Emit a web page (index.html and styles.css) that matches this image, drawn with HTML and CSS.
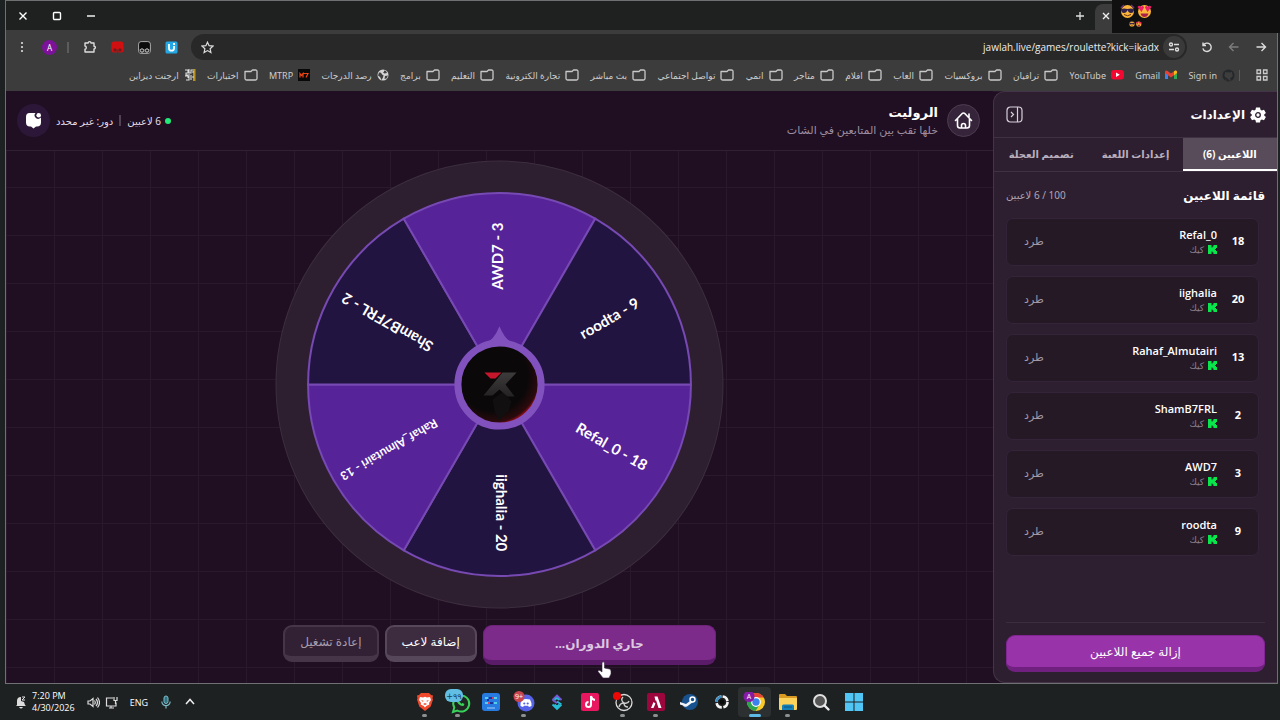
FILE: index.html
```html
<!DOCTYPE html>
<html lang="ar" dir="rtl">
<head>
    <meta charset="UTF-8">
    <title>الروليت</title>
    <meta name="viewport" content="width=device-width, initial-scale=1.0">
    <link rel="stylesheet" href="styles.css">
</head>
<body>
    <svg class="defs" aria-hidden="true">
        <symbol id="folder" viewBox="0 0 14 12"><path d="M1 2.500v7q0 1.500 1.500 1.500h9q1.500 0 1.500-1.500v-7q0-1.500-1.500-1.500H8.500L7 2.500z" fill="none" stroke="#c9c9c9" stroke-width="1.300" stroke-linejoin="round"/></symbol>
        <symbol id="kick" viewBox="0 0 9 9"><path d="M0 0h3.500v2.500h1V1.500h1V0H9v3H8v1H7v1h1v1h1v3H5.500V7.500h-1v-1h-1V9H0z" fill="#08e64c"/></symbol>
    </svg>

    <div class="window">
        <div class="tabstrip">
            <div class="tab"><button class="tab-close" aria-label="إغلاق التبويب"><svg width="8" height="8" viewBox="0 0 8 8"><path d="M1 1l6 6M7 1L1 7" stroke="#eee" stroke-width="1.400"/></svg></button></div>
            <button class="plain" aria-label="تبويب جديد"><svg width="10" height="10" viewBox="0 0 10 10"><path d="M5 1v8M1 5h8" stroke="#ddd" stroke-width="1.300"/></svg></button>
            <div class="window-buttons">
                <button class="plain" aria-label="تصغير"><svg width="10" height="10" viewBox="0 0 10 10"><path d="M1 5h8" stroke="#fff" stroke-width="1.400"/></svg></button>
                <button class="plain" aria-label="تكبير"><svg width="10" height="10" viewBox="0 0 10 10"><rect x="1.500" y="1.500" width="7" height="7" rx="1" fill="none" stroke="#fff" stroke-width="1.400"/></svg></button>
                <button class="plain" aria-label="إغلاق"><svg width="10" height="10" viewBox="0 0 10 10"><path d="M1.500 1.500l7 7M8.500 1.500l-7 7" stroke="#fff" stroke-width="1.400"/></svg></button>
            </div>
        </div>

        <div class="toolbar">
            <div class="nav-buttons">
                <button class="plain" aria-label="رجوع"><svg width="12" height="12" viewBox="0 0 12 12"><path d="M1.500 6h9M6.500 2l4 4-4 4" fill="none" stroke="#ddd" stroke-width="1.400"/></svg></button>
                <button class="plain" aria-label="للأمام"><svg width="12" height="12" viewBox="0 0 12 12"><path d="M10.500 6h-9M5.500 2l-4 4 4 4" fill="none" stroke="#7c7c7c" stroke-width="1.400"/></svg></button>
                <button class="plain" aria-label="تحديث"><svg width="12" height="12" viewBox="0 0 12 12"><path d="M2 1.500v3h3M2.300 4.300a4.200 4.200 0 1 1-.4 3" fill="none" stroke="#ddd" stroke-width="1.400"/></svg></button>
            </div>
            <div class="address">
                <button class="site-info" aria-label="معلومات الموقع"><svg width="12" height="12" viewBox="0 0 12 12" fill="none" stroke="#ddd" stroke-width="1.400"><circle cx="3" cy="3.500" r="1.500"/><path d="M6 3.500h5M1 8.500h5"/><circle cx="9" cy="8.500" r="1.500"/></svg></button>
                <input class="url" type="text" dir="ltr" aria-label="العنوان" value="jawlah.live/games/roulette?kick=ikadx">
                <button class="plain" aria-label="إضافة إلى المفضلة"><svg width="13" height="13" viewBox="0 0 13 13"><path d="M6.500 1.200l1.600 3.500 3.800.4-2.800 2.600.8 3.800-3.400-1.900-3.400 1.900.8-3.800L1.100 5.100l3.800-.4z" fill="none" stroke="#ddd" stroke-width="1.200"/></svg></button>
            </div>
            <div class="extensions">
                <svg width="13" height="13" viewBox="0 0 13 13"><rect x=".5" y=".5" width="12" height="12" rx="1.500" fill="#24a7e5"/><path d="M4 3v4.200a2.500 2.500 0 0 0 5 0V5" fill="none" stroke="#fff" stroke-width="1.800"/><path d="M8 2h2v2H8z" fill="#fff"/></svg>
                <svg width="13" height="13" viewBox="0 0 13 13"><rect x=".6" y=".6" width="11.800" height="11.800" rx="2.500" fill="#0b0b0b" stroke="#aaa"/><path d="M1 8h11v2q0 2-2 2H3q-2 0-2-2z" fill="#3c3c3c"/><circle cx="4" cy="9.500" r="1.700" fill="#222" stroke="#ccc"/><circle cx="9" cy="9.500" r="1.700" fill="#222" stroke="#ccc"/></svg>
                <svg width="13" height="13" viewBox="0 0 13 13"><rect x=".5" y=".5" width="12" height="11" rx="2.500" fill="#d01010"/><circle cx="4" cy="9" r="1.700" fill="#771818"/><circle cx="9" cy="9" r="1.700" fill="#771818"/><path d="M5.700 8.500h1.600v4H5.700z" fill="#3c3c3c"/></svg>
                <svg width="14" height="14" viewBox="0 0 14 14"><path d="M2 3h3.200a1.400 1.400 0 0 1 2.800 0h3v3.200a1.400 1.400 0 0 1 0 2.800v3H2V9.300a1.700 1.700 0 0 0 0-3.300z" fill="none" stroke="#ddd" stroke-width="1.400" stroke-linejoin="round"/></svg>
                <span class="divider"></span>
                <button class="profile">A</button>
                <button class="plain" aria-label="القائمة"><svg width="4" height="12" viewBox="0 0 4 12" fill="#ddd"><circle cx="2" cy="2" r="1.100"/><circle cx="2" cy="6" r="1.100"/><circle cx="2" cy="10" r="1.100"/></svg></button>
            </div>
        </div>

        <nav class="bookmarks">
            <svg width="12" height="12" viewBox="0 0 12 12" fill="none" stroke="#ccc" stroke-width="1.300"><path d="M1 1h3.500v3.500H1zM7.500 1H11v3.500H7.500zM1 7.500h3.500V11H1zM7.500 7.500H11V11H7.500z"/></svg>
            <span class="divider"></span>
            <div class="links">
                <a href="#"><svg width="13" height="13" viewBox="0 0 13 13"><circle cx="6.500" cy="6.500" r="6" fill="#25282b"/><path d="M4.500 12.500v-2q-2 .3-2.500-1.200M8.500 12.500v-2q0-1-.5-1.300 2.700-.5 2.700-3 0-1-.7-1.800.2-.8-.1-1.600-.9 0-1.700.7-1.700-.4-3.300 0-.8-.7-1.700-.7-.3.8-.1 1.600-.7.8-.7 1.800 0 2.500 2.700 3" fill="#3d3d3d"/></svg><span>Sign in</span></a>
                <a href="#"><svg width="12" height="10" viewBox="0 0 12 10"><path d="M0 1.500V9h3V4z" fill="#3f83f1"/><path d="M12 1.500V9H9V4z" fill="#31a853"/><path d="M0 1.500Q1-.2 2.600 1L6 3.600 9.400 1Q11-.2 12 1.500V3L6 7.500 0 3z" fill="#e34133"/><path d="M9 1.300L9.400 1Q11-.2 12 1.500V3L9 5.200z" fill="#f7bb15"/></svg><span>Gmail</span></a>
                <a href="#"><svg width="13" height="10" viewBox="0 0 13 10"><rect width="13" height="9.500" rx="3" fill="#f20831"/><path d="M5 2.600v4.300l3.800-2.100z" fill="#fff"/></svg><span>YouTube</span></a>
                <a href="#"><svg width="14" height="12"><use href="#folder"/></svg><span>ترافيان</span></a>
                <a href="#"><svg width="14" height="12"><use href="#folder"/></svg><span>بروكسيات</span></a>
                <a href="#"><svg width="14" height="12"><use href="#folder"/></svg><span>العاب</span></a>
                <a href="#"><svg width="14" height="12"><use href="#folder"/></svg><span>افلام</span></a>
                <a href="#"><svg width="14" height="12"><use href="#folder"/></svg><span>متاجر</span></a>
                <a href="#"><svg width="14" height="12"><use href="#folder"/></svg><span>انمي</span></a>
                <a href="#"><svg width="14" height="12"><use href="#folder"/></svg><span>تواصل اجتماعي</span></a>
                <a href="#"><svg width="14" height="12"><use href="#folder"/></svg><span>بث مباشر</span></a>
                <a href="#"><svg width="14" height="12"><use href="#folder"/></svg><span>تجارة الكترونية</span></a>
                <a href="#"><svg width="14" height="12"><use href="#folder"/></svg><span>التعليم</span></a>
                <a href="#"><svg width="14" height="12"><use href="#folder"/></svg><span>برامج</span></a>
                <a href="#"><svg width="12" height="12" viewBox="0 0 12 12"><circle cx="6" cy="6" r="5.500" fill="#d4d4d4"/><path d="M2 3.500q2-.5 2.500 1t2 1.500L6 8.500 4.500 11 3 8 1 6.500zM7 1.500q.5 1.500-1 2l1.500 1 2.500-.5-1-2zM8 7l3-.5-1.500 3L7.500 10z" fill="#404040"/></svg><span>رصد الدرجات</span></a>
                <a href="#"><svg width="12" height="12" viewBox="0 0 12 12"><rect width="12" height="12" fill="#080808"/><path d="M2 8.500v-4l1.500 2 1.500-2v4M5.500 4.500h4.500l-2 4" fill="none" stroke="#ed4312" stroke-width="1.200"/></svg><span>MTRP</span></a>
                <a href="#"><svg width="14" height="12"><use href="#folder"/></svg><span>اختبارات</span></a>
                <a href="#"><svg width="12" height="12" viewBox="0 0 12 12"><path d="M9 0h2.500v12H9z" fill="#b99424"/><path d="M1 1h3v3H2v2h4M5 0v4h2V1h2M1 7h3v2M5 7v4H2M7 6v5M8 8h2M8 3h2" fill="none" stroke="#ddd" stroke-width="1.100"/></svg><span>ارجنت ديزاين</span></a>
            </div>
        </nav>

        <div class="page">
            <aside class="sidebar">
                <header class="sidebar-header">
                    <svg width="16" height="16" viewBox="0 0 16 16"><path d="M6 .5h4l.5 2.300 1.300.7L14 2.800 15.900 6l-1.700 1.500v1L15.900 10 14 13.200l-2.200-.7-1.300.7-.5 2.300H6l-.5-2.300-1.300-.7-2.200.7L.1 10l1.700-1.500v-1L.1 6 2 2.800l2.200.7 1.300-.7z" fill="#fff"/><circle cx="8" cy="8" r="2.300" fill="#fff" stroke="#2d1f30" stroke-width="1.300"/></svg>
                    <h2>الإعدادات</h2>
                    <button class="plain collapse" aria-label="طي القائمة"><svg width="17" height="17" viewBox="0 0 17 17" fill="none" stroke="#d8d0da" stroke-width="1.200"><rect x="1" y="1" width="15" height="15" rx="3.500"/><path d="M11.500 1v15M5 6l2.500 2.500L5 11"/></svg></button>
                </header>
                <div class="tabs">
                    <button class="active">اللاعبين (6)</button>
                    <button>إعدادات اللعبة</button>
                    <button>تصميم العجلة</button>
                </div>
                <div class="list-header">
                    <h3>قائمة اللاعبين</h3>
                    <span>100 / 6 لاعبين</span>
                </div>
                <ul class="players">
                    <li><b>18</b><div class="player"><strong>Refal_0</strong><small><svg width="9" height="9"><use href="#kick"/></svg>كيك</small></div><button>طرد</button></li>
                    <li><b>20</b><div class="player"><strong>iighalia</strong><small><svg width="9" height="9"><use href="#kick"/></svg>كيك</small></div><button>طرد</button></li>
                    <li><b>13</b><div class="player"><strong>Rahaf_Almutairi</strong><small><svg width="9" height="9"><use href="#kick"/></svg>كيك</small></div><button>طرد</button></li>
                    <li><b>2</b><div class="player"><strong>ShamB7FRL</strong><small><svg width="9" height="9"><use href="#kick"/></svg>كيك</small></div><button>طرد</button></li>
                    <li><b>3</b><div class="player"><strong>AWD7</strong><small><svg width="9" height="9"><use href="#kick"/></svg>كيك</small></div><button>طرد</button></li>
                    <li><b>9</b><div class="player"><strong>roodta</strong><small><svg width="9" height="9"><use href="#kick"/></svg>كيك</small></div><button>طرد</button></li>
                </ul>
                <div class="sidebar-footer">
                    <button class="btn btn-clear">إزالة جميع اللاعبين</button>
                </div>
            </aside>

            <main class="game">
                <header class="game-header">
                    <a class="home" href="#" aria-label="الرئيسية"><svg width="19" height="19" viewBox="0 0 19 19" fill="none" stroke="#fff" stroke-width="1.600" stroke-linecap="round" stroke-linejoin="round"><path d="M1.500 9.500L8 2.700q1.500-1.400 3 0l6.500 6.800M3.500 8v6.500q0 2.500 2.500 2.500h7q2.500 0 2.500-2.500V8M15 6V3M7.500 17v-2.500a2 2 0 0 1 4 0V17"/></svg></a>
                    <div class="title">
                        <h1>الروليت</h1>
                        <p>خلها تقب بين المتابعين في الشات</p>
                    </div>
                    <div class="status">
                        <i class="dot"></i>
                        <span>6 لاعبين</span>
                        <span class="divider"></span>
                        <span>دور: غير محدد</span>
                    </div>
                    <button class="chat" aria-label="الدردشة"><svg width="17" height="17" viewBox="0 0 17 17"><path d="M4.500 1h6a3.300 3.300 0 0 0 5.300 4.500l.2 1.500v3.500q0 4-4 4h-1L8.500 16.500 6 14.500H5q-4 0-4-4V5q0-4 3.500-4z" fill="#fff"/><circle cx="13.700" cy="3.200" r="2.300" fill="#fff"/></svg></button>
                </header>

                <div class="wheel-area">
                    <svg class="wheel" viewBox="-224 -224 448 448">
                        <circle r="223" fill="#2d1f2f" stroke="#3d2e3f"/>
                        <g stroke="#7749b3" stroke-width="2">
                            <path d="M0 0H191A191 191 0 0 1 95.500 165.400Z" fill="#572399"/>
                            <path d="M0 0L95.500 165.400A191 191 0 0 1-95.500 165.400Z" fill="#221440"/>
                            <path d="M0 0L-95.500 165.400A191 191 0 0 1-191 0Z" fill="#572399"/>
                            <path d="M0 0H-191A191 191 0 0 1-95.500-165.400Z" fill="#221440"/>
                            <path d="M0 0L-95.500-165.400A191 191 0 0 1 95.500-165.400Z" fill="#572399"/>
                            <path d="M0 0L95.500-165.400A191 191 0 0 1 191 0Z" fill="#221440"/>
                        </g>
                        <g class="names">
                            <text x="128" y="3" transform="rotate(30)">Refal_0 - 18</text>
                            <text x="128" y="3" transform="rotate(90)">iighalia - 20</text>
                            <text class="long" x="128" y="3" transform="rotate(150)">Rahaf_Almutairi - 13</text>
                            <text x="128" y="3" transform="rotate(210)">ShamB7FRL - 2</text>
                            <text x="128" y="3" transform="rotate(270)">AWD7 - 3</text>
                            <text x="128" y="3" transform="rotate(330)">roodta - 9</text>
                        </g>
                        <path d="M0-58Q-6-43-15-41H15Q6-43 0-58z" fill="#8152bd"/>
                        <defs>
                            <radialGradient id="hub" cx=".42" cy=".4" r=".6"><stop offset=".7" stop-color="#0a0809"/><stop offset=".92" stop-color="#2c0a0d"/><stop offset="1" stop-color="#c4121d"/></radialGradient>
                            <linearGradient id="steel" x2="0" y2="1"><stop offset="0" stop-color="#3e3b3c"/><stop offset="1" stop-color="#252224"/></linearGradient>
                        </defs>
                        <circle r="41.500" fill="url(#hub)" stroke="#8152bd" stroke-width="7"/>
                        <path d="M-7 15L4 7 12 17 9 27-1 36-5 26z" fill="#120f10"/>
                        <path d="M3-12H17L6 0 15 12H8L0 5-7 11H-16L-11 5z" fill="url(#steel)"/>
                        <path d="M-15-12H2L-4-6H-9z" fill="#c5162b"/>
                    </svg>
                </div>

                <div class="actions">
                    <button class="btn btn-spin">جاري الدوران...<svg class="cursor" width="15" height="18" viewBox="0 0 15 18"><path d="M5 1.500q1.500-1.500 2.500.5V7l5 1q1.500.5 1.500 2v3l-2 4H6L1 10.500q0-2 2-1l2 1.500z" fill="#fff" stroke="#33203a" stroke-width=".6"/></svg></button>
                    <button class="btn btn-add">إضافة لاعب</button>
                    <button class="btn btn-reset">إعادة تشغيل</button>
                </div>
            </main>
        </div>
    </div>

    <div class="emojis">
        <svg width="34" height="28" viewBox="0 0 34 28">
            <g id="faces">
                <circle cx="7.500" cy="7.500" r="6.500" fill="#f9b43a"/><path d="M1 5q3-1 6.500 0Q11 4 14 5q0 4-3 4-2.500 0-3.500-3-1 3-3.500 3Q1 9 1 5z" fill="#30204a"/><path d="M4 10.500q3.500 2.500 7 0" fill="none" stroke="#6b3410"/><path d="M1 4L4 1M14 4l-3-3" stroke="#6c357d" stroke-width="1.500"/>
                <circle cx="24.500" cy="7.500" r="6.500" fill="#f9b43a"/><path d="M17.500 3q2-2.500 3.500 0 2-2 3 .5L21.500 8zM25 3.500q1-2.500 3-.5 1.500-2.500 3.500 0L27.500 8z" fill="#ee1d68"/><path d="M20.500 9.500h8q-1 3.500-4 3.500t-4-3.500z" fill="#a82048"/>
            </g>
            <use href="#faces" transform="translate(9 17) scale(.4)"/>
        </svg>
    </div>

    <footer class="taskbar">
        <div class="apps">
            <a href="#" aria-label="ابدأ"><svg width="20" height="20" viewBox="0 0 20 20" fill="#51c5f4"><path d="M1 1h8.500v8.500H1zM10.500 1H19v8.500h-8.500zM1 10.500h8.500V19H1zM10.500 10.500H19V19h-8.500z"/></svg></a>
            <a href="#" aria-label="بحث"><svg width="20" height="20" viewBox="0 0 20 20"><circle cx="9" cy="9" r="6" fill="#555" stroke="#e0e0e0" stroke-width="2"/><path d="M13.500 13.500l4 4" stroke="#eee" stroke-width="2.400" stroke-linecap="round"/></svg></a>
            <a class="open" href="#" aria-label="الملفات"><svg width="20" height="20" viewBox="0 0 20 20"><path d="M1 3q0-1 1-1h5l2 2h9q1 0 1 1v5H1z" fill="#d89a20"/><path d="M1 6h18v11q0 1-1 1H2q-1 0-1-1z" fill="#fbd25a"/><path d="M4 18v-4q0-1.500 1.500-1.500h9Q16 12.500 16 14v4z" fill="#157fb8"/><path d="M6 15h8" stroke="#0b5485"/></svg></a>
            <a class="open current" href="#" aria-label="Chrome"><svg width="24" height="20" viewBox="0 0 24 20"><circle cx="13" cy="10" r="9" fill="#f8c927"/><path d="M5.200 5.500A9 9 0 0 1 20.800 5.500H13L9 12z" fill="#e64436"/><path d="M5.200 5.500A9 9 0 0 0 12.500 19L17 12l-8 0z" fill="#2da450"/><circle cx="13" cy="10" r="4.300" fill="#3c82ec" stroke="#fff" stroke-width="1.200"/><circle cx="6" cy="4.500" r="5.500" fill="#861ba5"/><text x="6" y="7" font-size="7">A</text></svg></a>
            <a href="#" aria-label="المسجل"><svg width="20" height="20" viewBox="0 0 20 20" fill="none" stroke-width="2.600"><circle cx="10" cy="10" r="5.500" stroke="#f4f4f4" stroke-dasharray="7 1.640"/><path d="M4.500 10A5.500 5.500 0 0 1 10 4.500" stroke="#3e8fc5"/><circle cx="10" cy="10" r="2.500" fill="#0b0c0c"/></svg></a>
            <a href="#" aria-label="Steam"><svg width="20" height="20" viewBox="0 0 20 20"><circle cx="11" cy="10" r="8" fill="#17528e"/><path d="M1 10l6 2 4-3 3-3.500 2 3-4 3-4 3q-3 1-4-1l-3-1z" fill="#eef4fa"/><circle cx="13.500" cy="7.500" r="2.500" fill="#17528e" stroke="#fff" stroke-width="1.500"/></svg></a>
            <a class="open" href="#" aria-label="Lambda"><svg width="20" height="20" viewBox="0 0 20 20"><rect x="1" y="1" width="18" height="18" rx="2" fill="#9c063d"/><path d="M8.500 4.500h3L15.500 16h-3L10 8l-.5 1M7.500 10L5 16h2.500l2-4.500z" fill="#fff"/></svg></a>
            <a class="open" href="#" aria-label="OBS"><svg width="20" height="20" viewBox="0 0 20 20"><circle cx="11" cy="10.500" r="8" fill="#212222" stroke="#ddd" stroke-width="1.300"/><path d="M10 5q-3 3 1 6 4 1 5-2M11 11q-4 0-5 4M11 11q0 4 4 4" fill="none" stroke="#ccc" stroke-width="1.400"/><circle cx="4" cy="4" r="4" fill="#ed0808"/></svg></a>
            <a href="#" aria-label="TikTok"><svg width="20" height="20" viewBox="0 0 20 20"><rect x="1" y="1" width="18" height="18" rx="2" fill="#e9175f"/><path d="M11 4v8.500a2.500 2.500 0 1 1-2.500-2.500M11 4q.5 3.500 4 4" fill="none" stroke="#fff" stroke-width="2"/></svg></a>
            <a href="#" aria-label="Streamer"><svg width="20" height="20" viewBox="0 0 20 20" fill="none" stroke-width="1.800"><path d="M5.500 8L10 3.500 14.500 8M5.500 8l4.500 3" stroke="#7b57d8"/><path d="M14.500 12.500L10 17l-4.500-4.500M14.500 12.500L10 9.500M7.500 8L10 6l2.500 2M7.500 12.500l2.500 2 2.500-2" stroke="#26bdd7"/></svg></a>
            <a class="open" href="#" aria-label="Discord"><svg width="22" height="22" viewBox="0 0 22 22"><circle cx="13" cy="12" r="8.500" fill="#5663e9"/><path d="M9 8.500q4-1.200 8 0 2 3.500 1.500 6.500l-2.500 1-1-1.200h-4L10 16l-2.500-1Q7 12 9 8.500z" fill="#fff"/><circle cx="11.300" cy="12.500" r="1.100" fill="#5663e9"/><circle cx="14.700" cy="12.500" r="1.100" fill="#5663e9"/><circle cx="6" cy="5.500" r="5.500" fill="#c8454f"/><text x="6" y="8" font-size="7">9+</text></svg></a>
            <a href="#" aria-label="المتجر"><svg width="20" height="20" viewBox="0 0 20 20"><rect x="1" y="1" width="18" height="18" rx="3" fill="#277be0"/><path d="M4 6h3M13 6h3M4 11h3M13 11h3" stroke="#53d0e8" stroke-width="2"/><path d="M8 6h3M9 11h3M6 8h2" stroke="#1a329d" stroke-width="2"/><path d="M11 6h2M7 11h2" stroke="#cf416b" stroke-width="2"/><path d="M6 16h8" stroke="#a3cff9"/></svg></a>
            <a class="open" href="#" aria-label="WhatsApp"><svg width="26" height="26" viewBox="0 0 26 26"><path d="M8 23l1.300-4.500a8 8 0 1 1 3 3z" fill="#202722" stroke="#3ad15b" stroke-width="2"/><path d="M12.500 10.500q-1.500 2 1 4.500t5 2l1-2-2-1-1 .8-2.300-2.300.6-1-1-2z" fill="#3ad15b"/><rect x="0" y="0" width="18" height="13" rx="6" fill="#62bfe3"/><text class="badge-text" x="9" y="10" font-size="8">+٩٩</text></svg></a>
            <a class="open" href="#" aria-label="Brave"><svg width="20" height="20" viewBox="0 0 20 20"><path d="M6 1h8l2 2 2 .5-.5 3 .5 1-2.300 7L10 19l-5.700-4.500L2 7.500l.5-1-.5-3L4 3z" fill="#f0492c"/><path d="M5 5l3 .5 2-.8 2 .8 3-.5 1 3-2 3 .3 1.500-3 1.500L10 15.500 8.700 14l-3-1.500L6 11 4 8z" fill="#fff"/><path d="M6 8l2.500.7L8 10zM14 8l-2.500.7L12 10zM8 12l2-1 2 1-2 1z" fill="#f0492c"/></svg></a>
        </div>
        <div class="tray">
            <svg width="12" height="12" viewBox="0 0 12 12"><path d="M2 8l4-4.500L10 8" fill="none" stroke="#eee" stroke-width="1.500"/></svg>
            <svg width="12" height="14" viewBox="0 0 12 14"><rect x="4" y="1" width="4" height="7.500" rx="2" fill="#2f7382" stroke="#7db9c6"/><path d="M1.800 6.500a4.200 4.200 0 0 0 8.400 0M6 11v2.500" fill="none" stroke="#7db9c6" stroke-width="1.200"/></svg>
            <span class="lang">ENG</span>
            <span class="sound">
                <svg width="13" height="13" viewBox="0 0 13 13" fill="none" stroke="#ddd" stroke-width="1.200"><path d="M8 2H1.500v8H11V6.500M4 12h5M6 10v2"/><path d="M9 1v3.500h3V1M10.500 4.500V8"/></svg>
                <svg width="13" height="13" viewBox="0 0 13 13" fill="none" stroke="#ddd" stroke-width="1.200"><path d="M1 5h2l3-2.500v8L3 8H1zM7.500 4.500q1.500 2 0 4M9 3q3 3.500 0 7M10.500 1.500q4 5 0 10"/></svg>
            </span>
            <time dir="ltr">7:20 PM<br>4/30/2026</time>
            <svg width="12" height="13" viewBox="0 0 12 13"><path d="M2 5q0-4 4-4v4l3 1 1 3 1 1H1l1-1zM4 11h4q-2 3-4 0z" fill="#ddd"/><path d="M7 1h3L7 4h3" fill="none" stroke="#ddd"/></svg>
        </div>
    </footer>
</body>
</html>
```
FILE: styles.css
```css
* {
    box-sizing: border-box;
}
body {
    margin: 0;
    height: 100vh;
    display: flex;
    flex-direction: column;
    overflow: hidden;
    background: #1e2122;
    color: #fff;
    font-family: "Noto Sans", "DejaVu Sans", sans-serif;
}
h1, h2, h3, p, ul {
    margin: 0;
    padding: 0;
}
button {
    font-family: inherit;
    color: inherit;
    padding: 0;
    border: none;
    cursor: pointer;
}
a {
    color: inherit;
    text-decoration: none;
}
svg {
    display: block;
    flex: none;
}
.defs {
    position: absolute;
    width: 0;
    height: 0;
}
.plain {
    background: none;
}
.divider {
    width: 2px;
    height: 11px;
    background: #5c5c5c;
}

/* browser window */
.window {
    flex: 1;
    min-height: 0;
    display: flex;
    flex-direction: column;
    margin: 0 2px 0 5px;
    border: 1px solid #6e7071;
    background: #3c3c3c;
}
.tabstrip {
    height: 29px;
    display: flex;
    align-items: center;
    background: #1f2120;
}
.tab {
    width: 182px;
    height: 26px;
    align-self: flex-end;
    display: flex;
    align-items: center;
    justify-content: flex-end;
    padding: 0 0 3px 7px;
    border-radius: 8px 8px 0 0;
    background: #3c3c3c;
}
.tab-close {
    background: none;
}
.tabstrip > .plain {
    margin-right: 10px;
}
.window-buttons {
    display: flex;
    gap: 24px;
    margin-right: auto;
    padding-left: 12px;
}
.toolbar {
    height: 34px;
    display: flex;
    align-items: center;
    padding: 0 10px 0 14px;
}
.nav-buttons {
    display: flex;
    gap: 15px;
    padding-left: 14px;
}
.address {
    flex: 1;
    height: 26px;
    display: flex;
    align-items: center;
    gap: 2px;
    padding: 0 2px 0 10px;
    border-radius: 13px;
    background: #282828;
}
.site-info {
    width: 22px;
    height: 22px;
    display: flex;
    align-items: center;
    justify-content: center;
    border-radius: 50%;
    background: #3a3a3a;
}
.url {
    flex: 1;
    border: none;
    background: none;
    color: #eee;
    font-family: "Open Sans", sans-serif;
    font-size: 10px;
    text-align: right;
}
.extensions {
    display: flex;
    align-items: center;
    gap: 14px;
    padding-right: 13px;
}
.profile {
    width: 15px;
    height: 15px;
    margin: 0 -4px 0 4px;
    border-radius: 50%;
    background: #7b1299;
    font-size: 8px;
}
.bookmarks {
    height: 27px;
    display: flex;
    align-items: center;
    padding: 0 9px 5px 123px;
    gap: 16px;
    color: #ccc;
    font-size: 9px;
    white-space: nowrap;
}
.bookmarks .divider {
    width: 1px;
}
.links {
    flex: 1;
    display: flex;
    justify-content: space-between;
    margin-right: -12px;
}
.links a {
    display: flex;
    align-items: center;
    gap: 5px;
}

/* page */
.page {
    flex: 1;
    min-height: 0;
    display: flex;
    background-color: #200f22;
    background-image: linear-gradient(#2a182d 1px, transparent 1px), linear-gradient(90deg, #2a182d 1px, transparent 1px);
    background-size: 48px 48px;
}
.sidebar {
    width: 284px;
    display: flex;
    flex-direction: column;
    border: 1px solid #443447;
    border-right: none;
    border-radius: 12px 0 0 12px;
    background: #2d1f30;
}
.sidebar-header {
    height: 45px;
    display: flex;
    align-items: center;
    gap: 5px;
    padding: 0 11px 0 12px;
}
.sidebar-header h2 {
    font-size: 12px;
}
.collapse {
    margin-right: auto;
}
.tabs {
    display: flex;
    height: 35px;
    border: 1px solid #3f3042;
    border-width: 1px 0;
}
.tabs button {
    flex: 1;
    padding-bottom: 2px;
    background: none;
    color: #b9aebc;
    font-size: 10px;
    font-weight: bold;
}
.tabs .active {
    padding: 0;
    background: #584b5a;
    color: #fff;
    border-bottom: 2px solid #fff;
}
.list-header {
    height: 46px;
    display: flex;
    align-items: center;
    justify-content: space-between;
    padding: 0 12px;
}
.list-header h3 {
    font-size: 12px;
}
.list-header span {
    color: #b0a4b3;
    font-size: 10px;
}
.players {
    flex: 1;
    display: flex;
    flex-direction: column;
    gap: 10px;
    padding: 0 18px 0 12px;
    list-style: none;
}
.players li {
    height: 48px;
    display: flex;
    align-items: center;
    padding: 0 13px 0 17px;
    border: 1px solid #33243a;
    border-radius: 7px;
    background: #251926;
}
.players b {
    width: 14px;
    padding-bottom: 3px;
    font-size: 11px;
    text-align: center;
}
.player {
    flex: 1;
    padding-right: 14px;
}
.player strong {
    display: block;
    font-family: "Open Sans", sans-serif;
    font-size: 11px;
    font-weight: 600;
    line-height: 15px;
}
.player small {
    display: flex;
    align-items: center;
    gap: 4px;
    color: #8d828f;
    font-size: 9px;
    line-height: 15px;
}
.players button {
    padding-bottom: 3px;
    background: none;
    color: #a398a5;
    font-size: 11px;
}
.sidebar-footer {
    margin: 0 12px;
    padding: 12px 0 10px;
    border-top: 1px solid #3b2d3e;
}
.btn {
    border-radius: 9px;
    color: #fff;
    font-size: 12px;
}
.btn-clear {
    width: 100%;
    height: 37px;
    border: 1px solid #812593;
    border-bottom: 5px solid #70217f;
    background: #9833aa;
}

.game {
    flex: 1;
    min-width: 0;
    display: flex;
    flex-direction: column;
}
.game-header {
    height: 60px;
    display: flex;
    align-items: center;
    padding: 0 13px 0 11px;
    border-bottom: 1px solid #302033;
    background: #200f22;
}
.home, .chat {
    width: 33px;
    height: 33px;
    display: flex;
    align-items: center;
    justify-content: center;
    border-radius: 50%;
}
.home {
    border: 1px solid #4e3b51;
    background: #36253a;
}
.chat {
    background: #2c1739;
}
.title {
    flex: 1;
    padding-right: 9px;
}
.title h1 {
    font-size: 13px;
    line-height: 19px;
}
.title p {
    color: #9c8da0;
    font-size: 11px;
    line-height: 16px;
}
.status {
    display: flex;
    align-items: center;
    gap: 6px;
    padding-left: 6px;
    color: #e3dce5;
    font-size: 10px;
}
.status .divider {
    background: #514155;
}
.dot {
    width: 6px;
    height: 6px;
    margin-left: -2px;
    border-radius: 50%;
    background: #22ea78;
}
.wheel-area {
    flex: 1;
    min-height: 0;
    display: flex;
    justify-content: center;
    padding-top: 9px;
}
.wheel {
    height: 100%;
}
.names text {
    direction: ltr;
    fill: #fff;
    font-family: Lato, sans-serif;
    font-size: 15px;
    font-weight: 700;
    text-anchor: middle;
}
.names .long {
    font-size: 12px;
}
.actions {
    display: flex;
    justify-content: center;
    align-items: flex-start;
    gap: 6px;
    padding: 16px 0 18px;
}
.btn-spin {
    position: relative;
    width: 233px;
    height: 40px;
    border: 1px solid #6e237b;
    border-bottom: 5px solid #5a1c68;
    background: #7c2b8a;
    color: #dcc8e0;
    font-weight: bold;
}
.cursor {
    position: absolute;
    top: 35px;
    left: 113px;
}
.btn-add, .btn-reset {
    height: 37px;
    padding: 0 15px;
    border: 2px solid #56475a;
    border-bottom-width: 6px;
    background: #3d2c40;
}
.btn-reset {
    border-color: #463549;
    background: #322135;
    color: #a89cab;
}

/* chat overlay above the window */
.emojis {
    position: absolute;
    top: 0;
    right: 0;
    width: 168px;
    height: 33px;
    background: #101010;
}
.emojis svg {
    margin: 4px auto 0 8px;
}

.taskbar {
    height: 36px;
    display: flex;
    align-items: center;
    padding-right: 410px;
    font-family: "Open Sans", sans-serif;
    font-size: 9px;
}
.apps {
    display: flex;
}
.apps a {
    position: relative;
    width: 33px;
    height: 30px;
    display: flex;
    align-items: center;
    justify-content: center;
}
.apps text {
    direction: ltr;
    fill: #fff;
    text-anchor: middle;
}
.apps .badge-text {
    fill: #143c56;
    font-family: "DejaVu Sans", sans-serif;
}
.apps .open::after {
    content: "";
    position: absolute;
    bottom: 0;
    width: 5px;
    height: 3px;
    border-radius: 2px;
    background: #8e9090;
}
.apps .current {
    border-radius: 4px;
    background: #2d3031;
}
.apps .current::after {
    width: 12px;
    background: #5fbbe6;
}
.tray {
    display: flex;
    align-items: center;
    margin-right: auto;
    gap: 12px;
    padding-left: 15px;
}
.sound {
    display: flex;
    gap: 5px;
}
.tray time {
    margin-left: -7px;
    line-height: 12px;
}
```
